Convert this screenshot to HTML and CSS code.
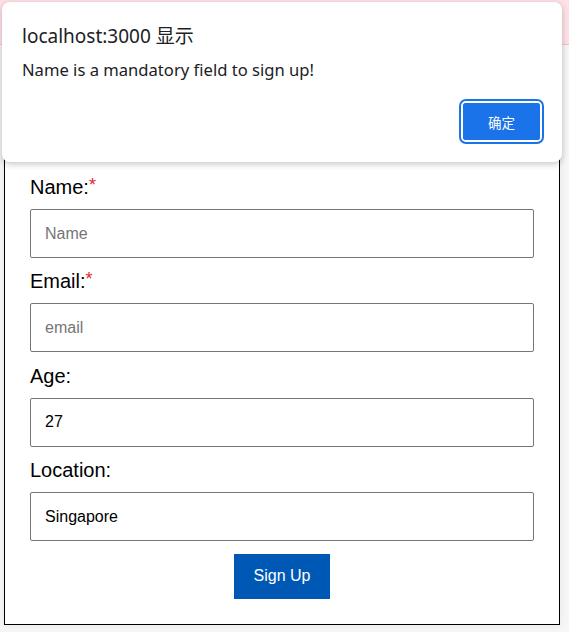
FILE: index.html
```html
<!DOCTYPE html>
<html lang="en">
<head>
<meta charset="utf-8">
<title>Sign Up</title>
<link rel="stylesheet" href="styles.css">
</head>
<body>
  <div class="banner"></div>
  <form class="card">
    <div class="field">
      <label class="label">Name:<span class="req">*</span></label>
      <input class="input" type="text" placeholder="Name">
    </div>
    <div class="field">
      <label class="label">Email:<span class="req">*</span></label>
      <input class="input" type="text" placeholder="email">
    </div>
    <div class="field">
      <label class="label">Age:</label>
      <input class="input" type="text" value="27">
    </div>
    <div class="field">
      <label class="label">Location:</label>
      <input class="input" type="text" value="Singapore">
    </div>
    <div class="actions">
      <button type="button" class="submit">Sign Up</button>
    </div>
  </form>

  <div class="dialog">
    <div class="dialog-title">localhost:3000 显示</div>
    <div class="dialog-msg">Name is a mandatory field to sign up!</div>
    <div class="dialog-actions">
      <button type="button" class="ok">确定</button>
    </div>
  </div>
</body>
</html>
```

FILE: styles.css
```css
html, body {
  margin: 0;
  padding: 0;
}
body {
  background: #f6f6f6;
  font-family: "Liberation Sans", Arial, sans-serif;
  width: 569px;
  height: 632px;
  overflow: hidden;
  position: relative;
}
.banner {
  height: 44px;
  background: #fde1e5;
  border-bottom: 1px solid #e9c6cc;
}
.card {
  margin: 4px 9px 0 4px;
  height: 576px;
  box-sizing: border-box;
  background: #fff;
  border: 1px solid #000;
  padding: 124px 25px 0 25px;
  box-shadow: 0 0 8px rgba(0,0,0,0.06);
}
.field {
  display: flex;
  flex-direction: column;
}
.label {
  font-size: 20px;
  line-height: 23px;
  color: #000;
  margin-top: 2px;
  margin-bottom: 10px;
}
.req {
  color: #e0262b;
  font-size: 18px;
  vertical-align: top;
  line-height: 18px;
}
.input {
  box-sizing: border-box;
  height: 49px;
  width: 504px;
  border: 1px solid #767676;
  border-radius: 2px;
  padding: 0 14px;
  font-family: "Liberation Sans", Arial, sans-serif;
  font-size: 16px;
  color: #000;
  margin: 0 0 10.4px 0;
  background: #fff;
}
.input::placeholder {
  color: #757575;
}
.actions {
  display: flex;
  justify-content: center;
  padding-top: 2px;
  width: 504px;
}
.submit {
  width: 96px;
  height: 45px;
  background: #0058b5;
  color: #fff;
  border: none;
  font-family: "Liberation Sans", Arial, sans-serif;
  font-size: 16px;
  padding: 0;
  margin-left: 0;
}
.dialog {
  position: absolute;
  left: 2px;
  top: 2px;
  width: 560px;
  height: 160px;
  box-sizing: border-box;
  background: #fff;
  border-radius: 8px;
  box-shadow: 0 2px 6px rgba(60,40,50,0.28);
  padding: 21px 20px 0 20px;
  font-family: "Noto Sans", "Noto Sans CJK SC", sans-serif;
  color: #202124;
}
.dialog-title {
  font-size: 19px;
  line-height: 26px;
}
.dialog-msg {
  font-size: 16.6px;
  line-height: 20px;
  margin-top: 11px;
}
.dialog-actions {
  display: flex;
  justify-content: flex-end;
  margin-top: 21px;
}
.ok {
  width: 81px;
  height: 41px;
  box-sizing: border-box;
  background: #1a73e8;
  color: #fff;
  border: 2px solid #fff;
  outline: 2px solid #1a73e8;
  outline-offset: -4px;
  box-shadow: 0 0 0 2px #1a73e8;
  border-radius: 5px;
  font-family: "Noto Sans CJK SC", sans-serif;
  font-size: 13.5px;
  padding: 0;
}
```
